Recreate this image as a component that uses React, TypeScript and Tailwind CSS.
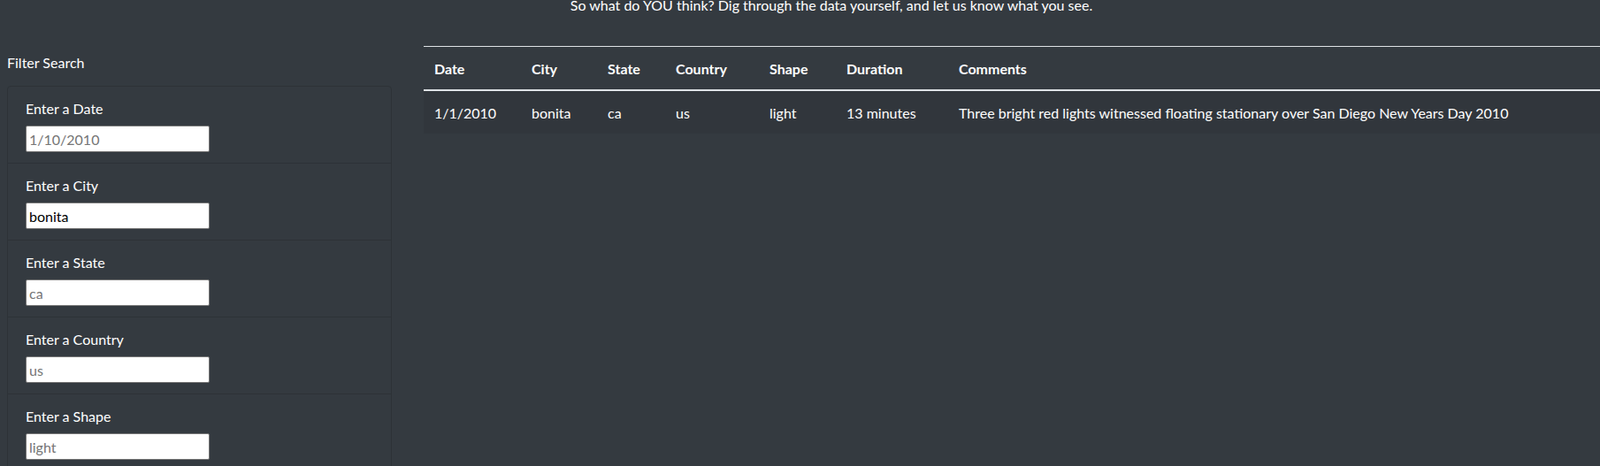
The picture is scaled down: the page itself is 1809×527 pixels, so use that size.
import { useState } from 'react';

const filters = [
  { label: 'Enter a Date', id: 'datetime', placeholder: '1/10/2010', value: '' },
  { label: 'Enter a City', id: 'city', placeholder: 'bonita', value: 'bonita' },
  { label: 'Enter a State', id: 'state', placeholder: 'ca', value: '' },
  { label: 'Enter a Country', id: 'country', placeholder: 'us', value: '' },
  { label: 'Enter a Shape', id: 'shape', placeholder: 'light', value: '' },
];

const columns = [
  { name: 'Date', width: 'w-[110px]' },
  { name: 'City', width: 'w-[86px]' },
  { name: 'State', width: 'w-[77px]' },
  { name: 'Country', width: 'w-[106px]' },
  { name: 'Shape', width: 'w-[87px]' },
  { name: 'Duration', width: 'w-[127px]' },
  { name: 'Comments', width: 'w-auto' },
];

const sightings = [
  {
    datetime: '1/1/2010',
    city: 'bonita',
    state: 'ca',
    country: 'us',
    shape: 'light',
    duration: '13 minutes',
    comments: 'Three bright red lights witnessed floating stationary over San Diego New Years Day 2010',
  },
];

export default function App() {
  const [values, setValues] = useState<Record<string, string>>(
    Object.fromEntries(filters.map((f) => [f.id, f.value]))
  );

  return (
    <div className="min-h-screen overflow-hidden bg-[#343a40] text-white font-['Lato',sans-serif] text-base leading-6">
      <p className="-mt-[6px] pl-[71px] text-center">
        So what do YOU think? Dig through the data yourself, and let us know what you see.
      </p>

      <div className="mt-[34px] flex gap-9">
        <aside className="ml-2 w-[435px] shrink-0 pt-[7px]">
          <p className="mb-[14px]">Filter Search</p>
          <ul className="rounded border border-[#2d3237] divide-y divide-[#2d3237]">
            {filters.map((f) => (
              <li key={f.id} className="px-5 pt-[13px] pb-3">
                <label htmlFor={f.id} className="mb-[7px] block">
                  {f.label}
                </label>
                <input
                  id={f.id}
                  type="text"
                  placeholder={f.placeholder}
                  value={values[f.id]}
                  onChange={(e) => setValues({ ...values, [f.id]: e.target.value })}
                  className="block h-[30px] w-[208px] rounded-[2px] border border-[#767676] bg-white px-[3px] text-base text-black outline-none placeholder:text-[#757575]"
                />
              </li>
            ))}
          </ul>
        </aside>

        <section className="min-w-0 flex-1">
          <table className="w-full table-fixed border-collapse text-left">
            <thead>
              <tr className="border-t border-[#dee2e6]">
                {columns.map((c) => (
                  <th
                    key={c.name}
                    className={`${c.width} border-b-2 border-[#dee2e6] px-3 pt-[13px] pb-[11px] font-bold`}
                  >
                    {c.name}
                  </th>
                ))}
              </tr>
            </thead>
            <tbody>
              {sightings.map((s) => (
                <tr key={s.comments} className="bg-[#31363c]">
                  <td className="px-3 pt-[13px] pb-[11px]">{s.datetime}</td>
                  <td className="px-3 pt-[13px] pb-[11px]">{s.city}</td>
                  <td className="px-3 pt-[13px] pb-[11px]">{s.state}</td>
                  <td className="px-3 pt-[13px] pb-[11px]">{s.country}</td>
                  <td className="px-3 pt-[13px] pb-[11px]">{s.shape}</td>
                  <td className="px-3 pt-[13px] pb-[11px]">{s.duration}</td>
                  <td className="whitespace-nowrap px-3 pt-[13px] pb-[11px]">{s.comments}</td>
                </tr>
              ))}
            </tbody>
          </table>
        </section>
      </div>
    </div>
  );
}
